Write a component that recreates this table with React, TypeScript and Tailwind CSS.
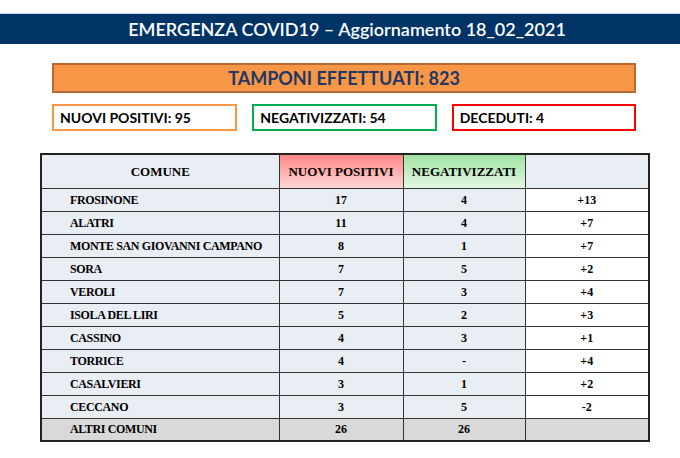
const rows = [
  ["FROSINONE", "17", "4", "+13"],
  ["ALATRI", "11", "4", "+7"],
  ["MONTE SAN GIOVANNI CAMPANO", "8", "1", "+7"],
  ["SORA", "7", "5", "+2"],
  ["VEROLI", "7", "3", "+4"],
  ["ISOLA DEL LIRI", "5", "2", "+3"],
  ["CASSINO", "4", "3", "+1"],
  ["TORRICE", "4", "-", "+4"],
  ["CASALVIERI", "3", "1", "+2"],
  ["CECCANO", "3", "5", "-2"],
]

function App() {
  return (
    <div className="w-[680px] h-[458px] bg-white overflow-hidden font-['Lato',sans-serif]">
      <div className="h-[14px] border-b border-[#c9d3df]" />

      <div className="h-[30px] bg-[#003366] flex items-center justify-center pl-[14px]">
        <span className="text-white text-[18px] font-semibold">
          EMERGENZA COVID19 – Aggiornamento 18_02_2021
        </span>
      </div>

      <div className="pl-[52px] pr-[44px] pt-[19px]">
        <div className="h-[30px] bg-[#f79646] border-2 border-[#b96a30] flex items-center justify-center">
          <span className="text-[#1f3864] text-[18px] font-bold">TAMPONI EFFETTUATI: 823</span>
        </div>

        <div className="mt-[11px] flex gap-[15px]">
          <div className="w-[186px] h-[27px] border-2 border-[#f79646] flex items-center pl-[6px]">
            <span className="text-black text-[14px] font-bold">NUOVI POSITIVI: 95</span>
          </div>
          <div className="w-[185px] h-[27px] border-2 border-[#00b050] flex items-center pl-[6px]">
            <span className="text-black text-[14px] font-bold">NEGATIVIZZATI: 54</span>
          </div>
          <div className="w-[185px] h-[27px] border-2 border-[#ff0000] flex items-center pl-[6px]">
            <span className="text-black text-[14px] font-bold">DECEDUTI: 4</span>
          </div>
        </div>
      </div>

      <div className="pl-[40px] pt-[22px]">
        <table className="border-collapse border-2 border-[#222] font-['Liberation_Serif',serif] font-bold text-[12px] text-black">
          <thead>
            <tr className="h-[34px]">
              <th className="w-[238px] bg-[#e9edf4] border-[1.5px] border-[#333] text-[13px]">COMUNE</th>
              <th className="w-[124px] bg-gradient-to-b from-[#ff8585] to-[#ffd6d6] border-[1.5px] border-[#333] text-[13px]">
                NUOVI POSITIVI
              </th>
              <th className="w-[122px] bg-gradient-to-b from-[#9fe2a0] to-[#e4f7e4] border-[1.5px] border-[#333] text-[13px]">
                NEGATIVIZZATI
              </th>
              <th className="w-[124px] bg-[#e9edf4] border-[1.5px] border-[#333]" />
            </tr>
          </thead>
          <tbody>
            {rows.map((r) => (
              <tr key={r[0]} className="h-[23px]">
                <td className="bg-[#e9edf4] border-[1.5px] border-[#333] pl-[28px] text-left tracking-[-0.03em]">{r[0]}</td>
                <td className="bg-[#e9edf4] border-[1.5px] border-[#333] text-center">{r[1]}</td>
                <td className="bg-[#e9edf4] border-[1.5px] border-[#333] text-center">{r[2]}</td>
                <td className="bg-white border-[1.5px] border-[#333] text-center">{r[3]}</td>
              </tr>
            ))}
            <tr className="h-[23px] bg-[#d9d9d9]">
              <td className="border-[1.5px] border-[#333] pl-[28px] text-left tracking-[-0.03em]">ALTRI COMUNI</td>
              <td className="border-[1.5px] border-[#333] text-center">26</td>
              <td className="border-[1.5px] border-[#333] text-center">26</td>
              <td className="border-[1.5px] border-[#333]" />
            </tr>
          </tbody>
        </table>
      </div>
    </div>
  )
}

export default App
